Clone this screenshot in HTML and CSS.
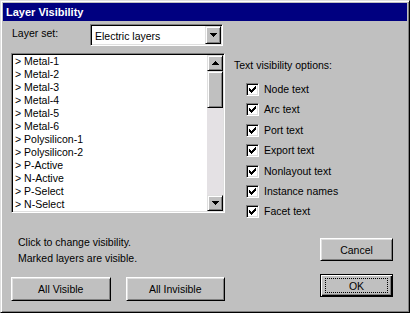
FILE: index.html
```html
<!DOCTYPE html>
<html>
<head lang="en">
    <meta charset="UTF-8">
    <title>Layer Visibility</title>
    <link rel="stylesheet" href="styles.css">
</head>
<body>
    <div class="window">
        <div class="titlebar">Layer Visibility</div>
        <div class="content">
            <div class="left">
                <div class="setrow">
                    <span class="label">Layer set:</span>
                    <div class="combo">
                        <span class="combo-text">Electric layers</span>
                        <span class="arrowbtn combo-btn">
                            <svg width="7" height="4" viewBox="0 0 7 4"><path d="M0 0h7v1h-7z M1 1h5v1h-5z M2 2h3v1h-3z M3 3h1v1h-1z"/></svg>
                        </span>
                    </div>
                </div>

                <div class="list">
                    <ul class="items">
                        <li>&gt; Metal-1</li>
                        <li>&gt; Metal-2</li>
                        <li>&gt; Metal-3</li>
                        <li>&gt; Metal-4</li>
                        <li>&gt; Metal-5</li>
                        <li>&gt; Metal-6</li>
                        <li>&gt; Polysilicon-1</li>
                        <li>&gt; Polysilicon-2</li>
                        <li>&gt; P-Active</li>
                        <li>&gt; N-Active</li>
                        <li>&gt; P-Select</li>
                        <li>&gt; N-Select</li>
                    </ul>
                    <div class="scrollbar">
                        <span class="arrowbtn sb-btn">
                            <svg width="7" height="4" viewBox="0 0 7 4"><path d="M3 0h1v1h-1z M2 1h3v1h-3z M1 2h5v1h-5z M0 3h7v1h-7z"/></svg>
                        </span>
                        <div class="track"><div class="thumb"></div></div>
                        <span class="arrowbtn sb-btn">
                            <svg width="7" height="4" viewBox="0 0 7 4"><path d="M0 0h7v1h-7z M1 1h5v1h-5z M2 2h3v1h-3z M3 3h1v1h-1z"/></svg>
                        </span>
                    </div>
                </div>

                <p class="hint">Click to change visibility.<br>Marked layers are visible.</p>

                <div class="btnrow">
                    <button class="btn wide">All Visible</button>
                    <button class="btn wide">All Invisible</button>
                </div>
            </div>

            <div class="right">
                <div class="opt-title">Text visibility options:</div>
                <ul class="opts">
                    <li><span class="box"><svg width="7" height="7" viewBox="0 0 7 7"><path d="M6 0h1v1h-1z M5 1h2v1h-2z M0 2h1v1h-1z M4 2h3v1h-3z M0 3h2v1h-2z M3 3h3v1h-3z M0 4h5v1h-5z M1 5h3v1h-3z M2 6h1v1h-1z"/></svg></span>Node text</li>
                    <li><span class="box"><svg width="7" height="7" viewBox="0 0 7 7"><path d="M6 0h1v1h-1z M5 1h2v1h-2z M0 2h1v1h-1z M4 2h3v1h-3z M0 3h2v1h-2z M3 3h3v1h-3z M0 4h5v1h-5z M1 5h3v1h-3z M2 6h1v1h-1z"/></svg></span>Arc text</li>
                    <li><span class="box"><svg width="7" height="7" viewBox="0 0 7 7"><path d="M6 0h1v1h-1z M5 1h2v1h-2z M0 2h1v1h-1z M4 2h3v1h-3z M0 3h2v1h-2z M3 3h3v1h-3z M0 4h5v1h-5z M1 5h3v1h-3z M2 6h1v1h-1z"/></svg></span>Port text</li>
                    <li><span class="box"><svg width="7" height="7" viewBox="0 0 7 7"><path d="M6 0h1v1h-1z M5 1h2v1h-2z M0 2h1v1h-1z M4 2h3v1h-3z M0 3h2v1h-2z M3 3h3v1h-3z M0 4h5v1h-5z M1 5h3v1h-3z M2 6h1v1h-1z"/></svg></span>Export text</li>
                    <li><span class="box"><svg width="7" height="7" viewBox="0 0 7 7"><path d="M6 0h1v1h-1z M5 1h2v1h-2z M0 2h1v1h-1z M4 2h3v1h-3z M0 3h2v1h-2z M3 3h3v1h-3z M0 4h5v1h-5z M1 5h3v1h-3z M2 6h1v1h-1z"/></svg></span>Nonlayout text</li>
                    <li><span class="box"><svg width="7" height="7" viewBox="0 0 7 7"><path d="M6 0h1v1h-1z M5 1h2v1h-2z M0 2h1v1h-1z M4 2h3v1h-3z M0 3h2v1h-2z M3 3h3v1h-3z M0 4h5v1h-5z M1 5h3v1h-3z M2 6h1v1h-1z"/></svg></span>Instance names</li>
                    <li><span class="box"><svg width="7" height="7" viewBox="0 0 7 7"><path d="M6 0h1v1h-1z M5 1h2v1h-2z M0 2h1v1h-1z M4 2h3v1h-3z M0 3h2v1h-2z M3 3h3v1h-3z M0 4h5v1h-5z M1 5h3v1h-3z M2 6h1v1h-1z"/></svg></span>Facet text</li>
                </ul>

                <div class="actions">
                    <button class="btn small">Cancel</button>
                    <button class="btn small default"><span class="focus">OK</span></button>
                </div>
            </div>
        </div>
    </div>
</body>
</html>
```

FILE: styles.css
```css
* {
    padding: 0;
    margin: 0;
    list-style: none;
    box-sizing: border-box;
}
body {
    background-color: #c0c0c0;
    font-family: "Liberation Sans", Arial, sans-serif;
    font-size: 10.5px;
    color: #000;
}
svg {
    display: block;
    shape-rendering: crispEdges;
}
/* window frame */
.window {
    width: 410px;
    height: 313px;
    padding: 2px;
    background-color: #c0c0c0;
    border: 1px solid;
    border-color: #dfdfdf #000 #000 #dfdfdf;
    box-shadow: inset 1px 1px #fff, inset -1px -1px #808080;
}
.titlebar {
    height: 18px;
    line-height: 18px;
    padding-left: 3px;
    background-color: #000080;
    color: #fff;
    font-weight: bold;
    font-size: 11px;
}
.content {
    display: flex;
}
.left {
    width: 214px;
    margin-left: 8px;
}
.right {
    margin-left: 9px;
}
/* layer set row */
.setrow {
    display: flex;
    height: 22px;
    margin-top: 3px;
}
.label {
    width: 79px;
    padding: 3px 0 0 1px;
    line-height: 13px;
}
.combo {
    width: 133px;
    height: 22px;
    display: flex;
    align-items: center;
    justify-content: space-between;
    background-color: #fff;
    border: 1px solid;
    border-color: #808080 #fff #fff #808080;
    box-shadow: inset 1px 1px #000, inset -1px -1px #dfdfdf;
    padding: 1px;
}
.combo-text {
    padding-left: 3px;
    padding-top: 1px;
}
.arrowbtn {
    display: flex;
    align-items: center;
    justify-content: center;
    width: 16px;
    background-color: #c0c0c0;
    border: 1px solid;
    border-color: #dfdfdf #000 #000 #dfdfdf;
    box-shadow: inset 1px 1px #fff, inset -1px -1px #808080;
}
.combo-btn {
    height: 18px;
}
/* list */
.list {
    display: flex;
    height: 160px;
    margin-top: 7px;
    background-color: #fff;
    border: 1px solid;
    border-color: #808080 #fff #fff #808080;
    box-shadow: inset 1px 1px #000, inset -1px -1px #dfdfdf;
    padding: 1px;
}
.items {
    flex: 1;
    padding-left: 2px;
    overflow: hidden;
}
.items li {
    height: 13px;
    line-height: 13px;
    white-space: nowrap;
}
.scrollbar {
    width: 16px;
    display: flex;
    flex-direction: column;
}
.sb-btn {
    height: 16px;
}
.track {
    flex: 1;
    background-color: #e4e1e4;
}
.thumb {
    height: 37px;
    background-color: #c0c0c0;
    border: 1px solid;
    border-color: #dfdfdf #000 #000 #dfdfdf;
    box-shadow: inset 1px 1px #fff, inset -1px -1px #808080;
}
.hint {
    margin-top: 21px;
    padding-left: 7px;
    line-height: 16px;
}
/* buttons */
.btn {
    font-family: inherit;
    font-size: 10.5px;
    color: #000;
    background-color: #c0c0c0;
    border: 1px solid;
    border-color: #fff #000 #000 #fff;
    box-shadow: inset 1px 1px #dfdfdf, inset -1px -1px #808080;
    display: flex;
    align-items: center;
    justify-content: center;
}
.btnrow {
    display: flex;
    gap: 15px;
    margin-top: 11px;
}
.wide {
    width: 100px;
    height: 24px;
}
.small {
    width: 73px;
    height: 23px;
}
.default {
    border-color: #000;
    box-shadow: inset 1px 1px #fff, inset -1px -1px #000, inset -2px -2px #808080;
}
.focus {
    display: flex;
    align-items: center;
    justify-content: center;
    width: 63px;
    height: 15px;
    border: 1px dotted #000;
}
/* options */
.opt-title {
    margin-top: 38px;
    line-height: 13px;
}
.opts {
    margin-top: 7px;
}
.opts li {
    display: flex;
    align-items: center;
    height: 20px;
    padding-left: 12px;
}
.opts li:nth-child(3),
.opts li:nth-child(5) {
    margin-top: 1px;
}
.box {
    width: 13px;
    height: 13px;
    margin-right: 5px;
    padding: 2px;
    background-color: #fff;
    border: 1px solid;
    border-color: #808080 #fff #fff #808080;
    box-shadow: inset 1px 1px #000, inset -1px -1px #dfdfdf;
}
.actions {
    margin-left: 86px;
}
.actions .btn {
    margin-top: 17px;
}
.actions .default {
    margin-top: 13px;
}
```
